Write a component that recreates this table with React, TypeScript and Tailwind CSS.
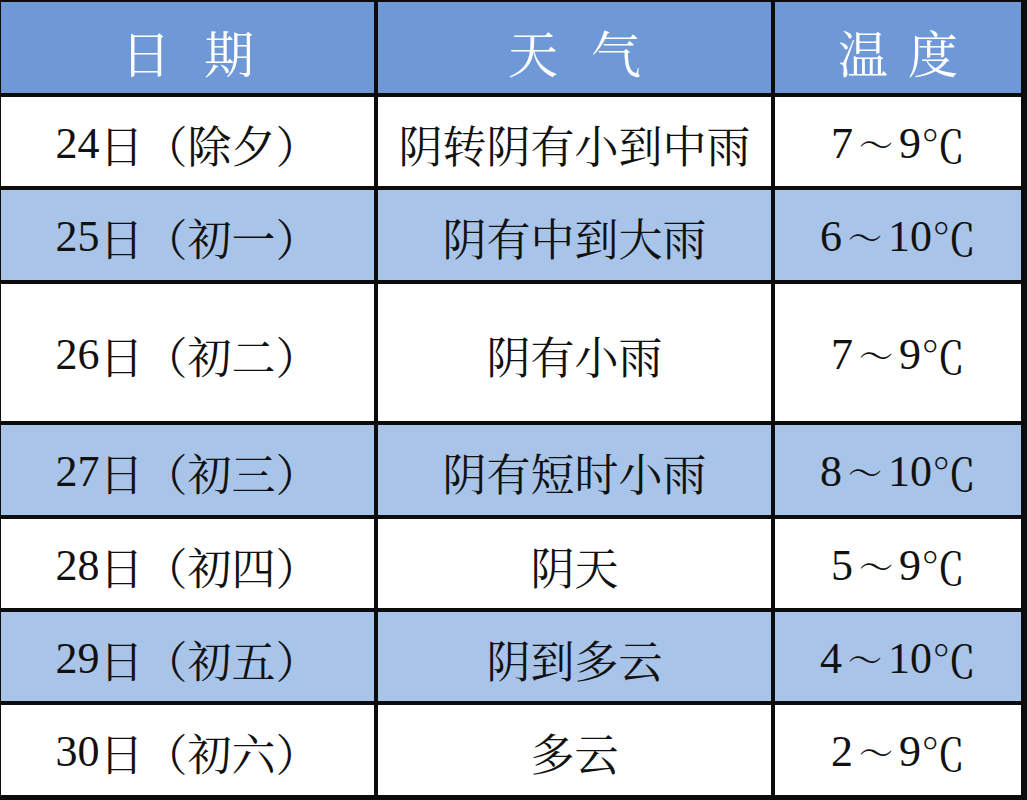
const rows = [
  { date: '24', lunar: '除夕', weather: '阴转阴有小到中雨', lo: '7', hi: '9', h: 'h-[89px]', shade: false },
  { date: '25', lunar: '初一', weather: '阴有中到大雨', lo: '6', hi: '10', h: 'h-[90px]', shade: true },
  { date: '26', lunar: '初二', weather: '阴有小雨', lo: '7', hi: '9', h: 'h-[137px]', shade: false },
  { date: '27', lunar: '初三', weather: '阴有短时小雨', lo: '8', hi: '10', h: 'h-[90px]', shade: true },
  { date: '28', lunar: '初四', weather: '阴天', lo: '5', hi: '9', h: 'h-[89px]', shade: false },
  { date: '29', lunar: '初五', weather: '阴到多云', lo: '4', hi: '10', h: 'h-[89px]', shade: true },
  { date: '30', lunar: '初六', weather: '多云', lo: '2', hi: '9', h: 'h-[90px]', shade: false },
]

function Cell({ children, shade, h }: { children: React.ReactNode; shade: boolean; h: string }) {
  return (
    <div
      className={`${h} flex items-center justify-center pt-[4px] text-[44px] leading-none text-[#111] ${
        shade ? 'bg-[#a9c4e9]' : 'bg-white'
      }`}
    >
      {children}
    </div>
  )
}

// digits are Times-like in the picture
function Num({ children }: { children: React.ReactNode }) {
  return <span className="font-['Liberation_Serif']">{children}</span>
}

function Head({ a, b, gap }: { a: string; b: string; gap: string }) {
  return (
    <div className={`h-[91px] bg-[#6f98d6] flex items-center justify-center pt-[6px] ${gap} text-[50px] leading-none text-white`}>
      <span>{a}</span>
      <span>{b}</span>
    </div>
  )
}

export default function App() {
  return (
    <div className="w-[1027px] h-[800px] bg-white font-['Noto_Serif_CJK_SC','Noto_Sans_CJK_SC']">
      <div className="grid grid-cols-[373px_393px_246px] gap-[4px] bg-[#0c0c0c] pl-[1px] pt-[2px] pr-[6px] pb-[5px]">
        <Head a="日" b="期" gap="gap-[33px]" />
        <Head a="天" b="气" gap="gap-[33px]" />
        <Head a="温" b="度" gap="gap-[20px]" />
        {rows.map(r => (
          <div key={r.date} className="contents">
            <Cell shade={r.shade} h={r.h}>
              <Num>{r.date}</Num>
              <span>日（{r.lunar}）</span>
            </Cell>
            <Cell shade={r.shade} h={r.h}>
              {r.weather}
            </Cell>
            <Cell shade={r.shade} h={r.h}>
              <Num>{r.lo}</Num>
              <span className="px-[6px] text-[34px]">～</span>
              <Num>{r.hi}</Num>
              <span>℃</span>
            </Cell>
          </div>
        ))}
      </div>
    </div>
  )
}
